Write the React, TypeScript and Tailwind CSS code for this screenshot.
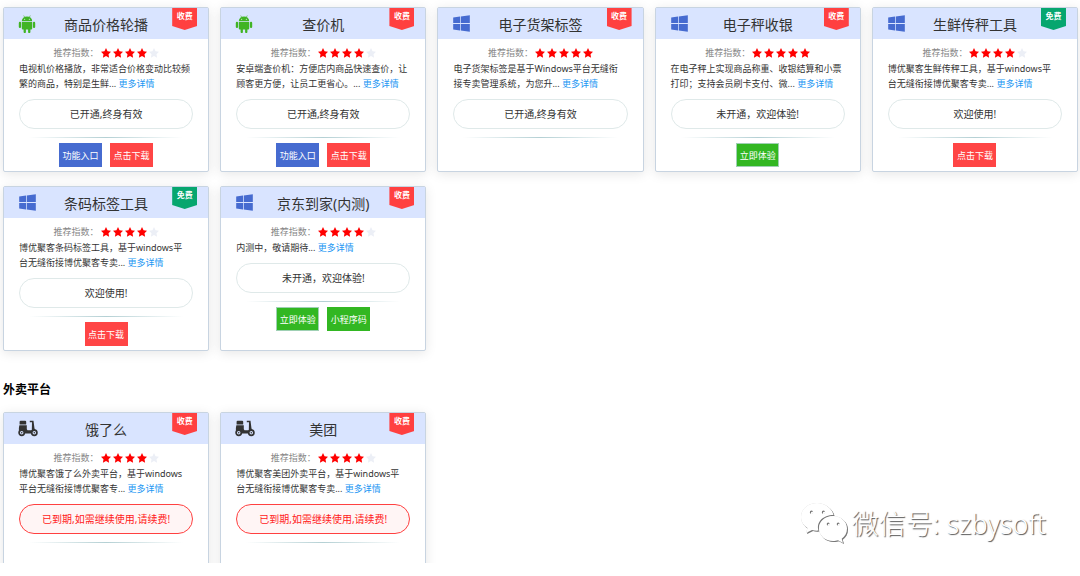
import React from "react";
import { FaWindows } from "react-icons/fa";
import clsx from "clsx";

type IconType = "android" | "windows" | "scooter";
type Action = "entry" | "download" | "trial" | "qrcode";

type AppItem = {
  title: string;
  icon: IconType;
  free?: boolean;
  stars: number;
  desc: string;
  status: string;
  expired?: boolean;
  actions: Action[];
};

const tools: AppItem[] = [
  {
    title: "商品价格轮播",
    icon: "android",
    stars: 4,
    desc: "电视机价格播放，非常适合价格变动比较频繁的商品，特别是生鲜...",
    status: "已开通,终身有效",
    actions: ["entry", "download"],
  },
  {
    title: "查价机",
    icon: "android",
    stars: 4,
    desc: "安卓端查价机：方便店内商品快速查价，让顾客更方便，让员工更省心。...",
    status: "已开通,终身有效",
    actions: ["entry", "download"],
  },
  {
    title: "电子货架标签",
    icon: "windows",
    stars: 5,
    desc: "电子货架标签是基于Windows平台无缝衔接专卖管理系统，为您升...",
    status: "已开通,终身有效",
    actions: [],
  },
  {
    title: "电子秤收银",
    icon: "windows",
    stars: 5,
    desc: "在电子秤上实现商品称重、收银结算和小票打印；支持会员刷卡支付、微...",
    status: "未开通，欢迎体验!",
    actions: ["trial"],
  },
  {
    title: "生鲜传秤工具",
    icon: "windows",
    free: true,
    stars: 4,
    desc: "博优聚客生鲜传秤工具，基于windows平台无缝衔接博优聚客专卖...",
    status: "欢迎使用!",
    actions: ["download"],
  },
  {
    title: "条码标签工具",
    icon: "windows",
    free: true,
    stars: 4,
    desc: "博优聚客条码标签工具，基于windows平台无缝衔接博优聚客专卖...",
    status: "欢迎使用!",
    actions: ["download"],
  },
  {
    title: "京东到家(内测)",
    icon: "windows",
    stars: 4,
    desc: "内测中，敬请期待...",
    status: "未开通，欢迎体验!",
    actions: ["trial", "qrcode"],
  },
];

const takeaway: AppItem[] = [
  {
    title: "饿了么",
    icon: "scooter",
    stars: 4,
    desc: "博优聚客饿了么外卖平台，基于windows平台无缝衔接博优聚客专...",
    status: "已到期,如需继续使用,请续费!",
    expired: true,
    actions: [],
  },
  {
    title: "美团",
    icon: "scooter",
    stars: 4,
    desc: "博优聚客美团外卖平台，基于windows平台无缝衔接博优聚客专卖...",
    status: "已到期,如需继续使用,请续费!",
    expired: true,
    actions: [],
  },
];

const actionMap: Record<Action, { label: string; className: string }> = {
  entry: { label: "功能入口", className: "bg-[#466bd0] border-[#466bd0]" },
  download: { label: "点击下载", className: "bg-[#ff4545] border-[#ff4545]" },
  trial: { label: "立即体验", className: "bg-[#32b722] border-[#9fd0b4]" },
  qrcode: { label: "小程序码", className: "bg-[#32b722] border-[#32b722]" },
};

const AndroidIcon = () => (
  <svg viewBox="0 0 18 18" className="size-[18px] fill-[#41b425]" aria-hidden="true">
    <path d="M3.8 6.3a5.2 4.9 0 0 1 10.4 0Z" />
    <path d="M5.7.5 7 2.7M12.3.5 11 2.7" stroke="#41b425" strokeWidth=".6" />
    <circle cx="6.7" cy="4.2" r=".5" fill="#fff" />
    <circle cx="11.3" cy="4.2" r=".5" fill="#fff" />
    <path d="M3.8 6.9h10.4v6.7a1 1 0 0 1-1 1h-.8v2.4a1.1 1.1 0 0 1-2.3 0v-2.4H7.9v2.4a1.1 1.1 0 0 1-2.3 0v-2.4h-.8a1 1 0 0 1-1-1Z" />
    <rect x=".8" y="6.8" width="2.3" height="6.3" rx="1.1" />
    <rect x="14.9" y="6.8" width="2.3" height="6.3" rx="1.1" />
  </svg>
);

const ScooterIcon = () => (
  <svg viewBox="0 0 20 17" className="h-[17px] w-5 fill-[#333]" aria-hidden="true">
    <path d="M2.6.8h4.6a1 1 0 0 1 1 1v2.6H1.600V1.800a1 1 0 0 1 1-1Z" />
    <path d="M1.400 5.200h7.400v3.600c0 .9.500 1.500 1.300 1.500h3.700L14 2.300h-2.200V.8h3.700l1 7.800 1.500 2-2.500 3H5L1 10.500c-.4-2 .1-4 .4-5.300Z" />
    <circle cx="3.700" cy="12.700" r="2.600" fill="#d9e4ff" stroke="#333" strokeWidth="1.700" />
    <circle cx="16.300" cy="12.700" r="2.600" fill="#d9e4ff" stroke="#333" strokeWidth="1.700" />
    <circle cx="3.700" cy="12.700" r=".8" />
    <circle cx="16.300" cy="12.700" r=".8" />
  </svg>
);

const StarIcon = ({ active }: { active: boolean }) => (
  <svg
    viewBox="0 0 20 20"
    className={clsx("size-2.5", active ? "fill-[#ff0000]" : "fill-[#eceff6]")}
    aria-hidden="true"
  >
    <path d="m10 0 3.1 6.4 6.9 1-5 4.9 1.2 7.1-6.2-3.300-6.200 3.300L5 12.300 0 7.400l6.900-1Z" />
  </svg>
);

const AppIcon = ({ type }: { type: IconType }) => {
  switch (type) {
    case "android":
      return <AndroidIcon />;
    case "windows":
      return <FaWindows className="size-[19px] text-[#466bd0]" aria-hidden="true" />;
    default:
      return <ScooterIcon />;
  }
};

const AppCard = ({ item }: { item: AppItem }) => {
  return (
    <article className="flex min-h-[165px] flex-col rounded-xs border border-[#c8d4e1] bg-white shadow-[0_2px_12px_rgba(0,0,0,0.1)]">
      <header className="grid h-[31px] grid-cols-[1fr_auto_1fr] items-center bg-[#d9e4ff] px-[11px]">
        <div className="pl-[3px]">
          <AppIcon type={item.icon} />
        </div>
        <h3 className="pt-0.5 text-[14px] leading-5 text-[#333]">{item.title}</h3>
        <span
          className={clsx(
            "h-[22px] w-[25px] self-start justify-self-end text-center text-[8px] leading-4 font-bold text-white [clip-path:polygon(0_0,100%_0,100%_82%,50%_100%,0_82%)]",
            item.free ? "bg-[#06a66f]" : "bg-[#ff4040]"
          )}
        >
          {item.free ? "免费" : "收费"}
        </span>
      </header>
      <div className="flex flex-col px-[15px] pt-[5px] pb-1">
        <div className="flex h-[17px] items-center justify-center gap-0.5 text-[9px] text-[#888]">
          <span>推荐指数：</span>
          {[1, 2, 3, 4, 5].map((n) => (
            <StarIcon key={n} active={n <= item.stars} />
          ))}
        </div>
        <p className="pr-[3px] text-[9px] leading-[15px] break-all text-[#333]">
          {item.desc}{" "}
          <a href="#" className="text-[#2196f3]">更多详情</a>
        </p>
        <div
          className={clsx(
            "mt-2 flex h-[30px] items-center justify-center rounded-full border text-[10px]",
            item.expired ? "border-[#ff4040] bg-[#fff5f5] text-[#ff1a1a]" : "border-[#dfe9e9] text-[#333]"
          )}
        >
          {item.status}
        </div>
        <div className="mx-2.5 mt-2 h-px bg-linear-to-r from-transparent via-[#b4d0d4] to-transparent" />
        {item.actions.length > 0 && (
          <div className="mt-[5px] flex justify-center gap-2">
            {item.actions.map((action) => (
              <button
                key={action}
                type="button"
                className={clsx("h-6 w-[43px] border pt-0.5 text-[9px] text-white", actionMap[action].className)}
              >
                {actionMap[action].label}
              </button>
            ))}
          </div>
        )}
      </div>
    </article>
  );
};

const CardGrid = ({ items }: { items: AppItem[] }) => (
  <div className="grid grid-cols-5 gap-x-[11px] gap-y-3.5">
    {items.map((item) => (
      <AppCard key={item.title} item={item} />
    ))}
  </div>
);

const Watermark = () => (
  <div className="absolute right-[34px] bottom-[30px] flex items-center gap-1 text-white">
    <svg
      viewBox="0 0 48 44"
      className="h-11 w-12 fill-white [filter:drop-shadow(1px_1px_0.5px_#777)_drop-shadow(0_0_0.5px_#ccc)]"
      aria-hidden="true"
    >
      <path
        fillRule="evenodd"
        d="M17 1C8 1 1 7 1 15c0 5 2.500 8.500 6.500 11L6 31l6-3c2 .5 4 .8 6.500.6C16 20 23 13 33.500 13 32 6 25 1 17 1ZM11.500 8.500a1.700 1.700 0 1 1 0 3.400 1.700 1.700 0 0 1 0-3.400Zm12 0a1.700 1.700 0 1 1 0 3.400 1.700 1.700 0 0 1 0-3.400Z"
      />
      <path
        fillRule="evenodd"
        d="M33 14c-8 0-14 5.500-14 12.500S25 39 33 39c2 0 3.500-.3 5-.8l5 2.800-1.300-4.300C45 34.500 47 31 47 26.500 47 19.500 41 14 33 14Zm-4.800 6.500a1.500 1.500 0 1 1 0 3 1.500 1.500 0 0 1 0-3Zm10 0a1.500 1.500 0 1 1 0 3 1.500 1.500 0 0 1 0-3Z"
      />
    </svg>
    <span className="text-[27px] leading-9 font-light [text-shadow:1px_1px_1px_#555]">微信号: szbysoft</span>
  </div>
);

const App = () => {
  return (
    <div className="relative h-screen bg-white pb-[13px] font-['Noto_Sans','Noto_Sans_CJK_SC',sans-serif]">
      <main className="h-full overflow-hidden pt-[7px] pr-0.5 pl-[3px]">
        <CardGrid items={tools} />
        <h2 className="mt-[29px] mb-3 text-[12px] leading-5 font-bold text-black">外卖平台</h2>
        <CardGrid items={takeaway} />
      </main>
      <Watermark />
    </div>
  );
};

export default App;
